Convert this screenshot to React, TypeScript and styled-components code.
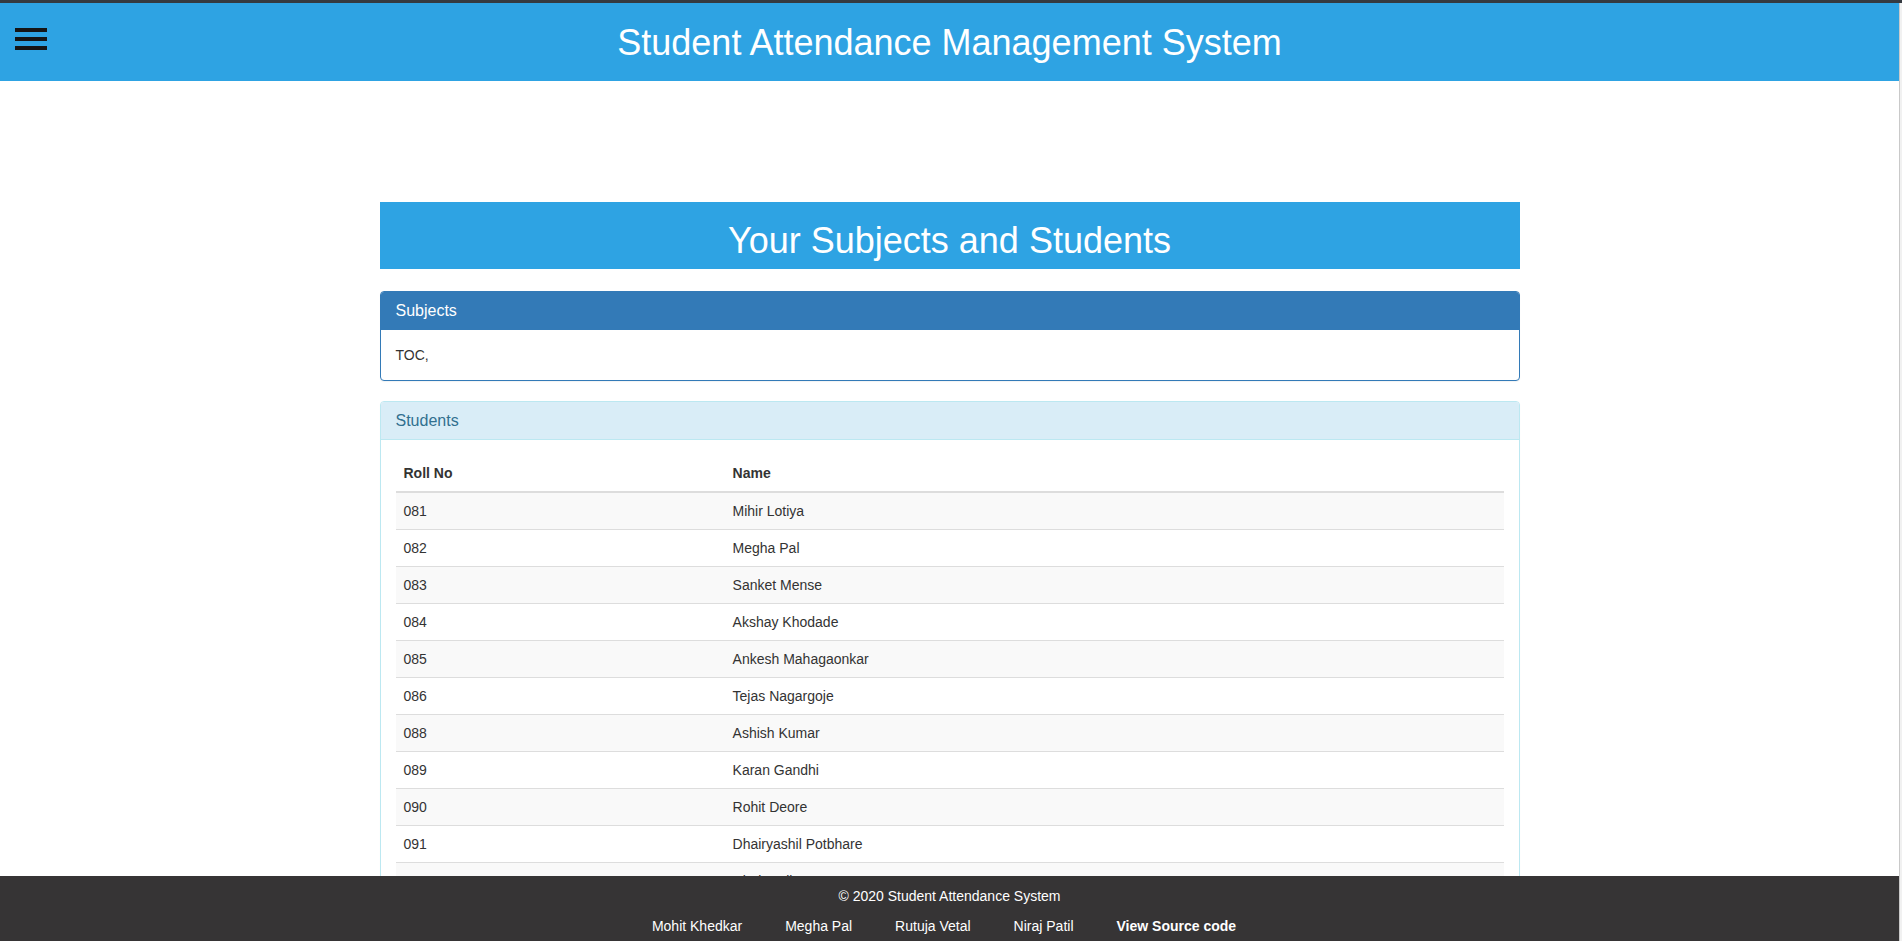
import styled, { createGlobalStyle } from 'styled-components';

const GlobalStyle = createGlobalStyle`
  * {
    box-sizing: border-box;
  }
  html, body {
    margin: 0;
    padding: 0;
    height: 100%;
    overflow: hidden;
  }
  body {
    font-family: 'Liberation Sans', Arial, Helvetica, sans-serif;
    font-size: 14px;
    line-height: 20px;
    color: #333;
    background: #fff;
  }
`;

const Shell = styled.div`
  display: flex;
  height: 100vh;
  border-top: 3px solid #353a40;
`;

const Page = styled.div`
  flex: 1;
  display: flex;
  flex-direction: column;
  min-width: 0;
`;

const ScrollTrack = styled.div`
  width: 3px;
  background: #f1f1f1;
  border-left: 1px solid #c9c9c9;
`;

const Header = styled.header`
  height: 78px;
  background-color: #2ea3e3;
  display: grid;
  grid-template-columns: 1fr auto 1fr;
  align-items: center;
`;

const Burger = styled.button`
  justify-self: start;
  margin-left: 15px;
  margin-bottom: 6px;
  width: 32px;
  height: 22px;
  padding: 0;
  border: none;
  background: transparent;
  display: flex;
  flex-direction: column;
  justify-content: space-between;
  cursor: pointer;
  span {
    display: block;
    height: 4px;
    background: #151515;
  }
`;

const Title = styled.h1`
  margin: 2px 0 0;
  font-size: 36px;
  font-weight: normal;
  line-height: 40px;
  color: #fff;
`;

const Content = styled.main`
  flex: 1;
  overflow: hidden;
  padding-top: 121px;
`;

const Container = styled.div`
  width: 1140px;
  margin: 0 auto;
`;

const Banner = styled.h2`
  margin: 0 0 22px;
  padding: 19px 0 8px;
  background-color: #2ea3e3;
  color: #fff;
  font-size: 36px;
  font-weight: normal;
  line-height: 40px;
  text-align: center;
`;

const Panel = styled.section<{ tone: 'primary' | 'info' }>`
  margin-bottom: 20px;
  background: #fff;
  border: 1px solid ${(p) => (p.tone === 'primary' ? '#337ab7' : '#bce8f1')};
  border-radius: 4px;
  box-shadow: 0 1px 1px rgba(0, 0, 0, 0.05);
`;

const PanelHeading = styled.div<{ tone: 'primary' | 'info' }>`
  padding: 10px 15px;
  border-bottom: 1px solid ${(p) => (p.tone === 'primary' ? '#337ab7' : '#bce8f1')};
  border-radius: 3px 3px 0 0;
  background-color: ${(p) => (p.tone === 'primary' ? '#337ab7' : '#d9edf7')};
  color: ${(p) => (p.tone === 'primary' ? '#fff' : '#31708f')};
  font-size: 16px;
  line-height: 17px;
`;

const PanelBody = styled.div`
  padding: 15px;
`;

const Table = styled.table`
  width: 100%;
  border-collapse: collapse;
  border-spacing: 0;
  th,
  td {
    padding: 8px;
    text-align: left;
    vertical-align: top;
    line-height: 20px;
  }
  th {
    font-weight: bold;
    border-bottom: 2px solid #ddd;
  }
  th:first-child {
    width: 29.7%;
  }
  td {
    border-top: 1px solid #ddd;
  }
  tbody tr:nth-of-type(odd) {
    background-color: #f9f9f9;
  }
`;

const Footer = styled.footer`
  height: 65px;
  padding-top: 10px;
  background-color: #363435;
  color: #fff;
  text-align: center;
`;

const Copy = styled.p`
  margin: 0 0 10px;
`;

const Links = styled.div`
  display: flex;
  justify-content: center;
  gap: 43px;
  padding-right: 11px;
`;

const FootLink = styled.a<{ strong?: boolean }>`
  color: #fff;
  text-decoration: none;
  font-weight: ${(p) => (p.strong ? 'bold' : 'normal')};
`;

const students = [
  ['081', 'Mihir Lotiya'],
  ['082', 'Megha Pal'],
  ['083', 'Sanket Mense'],
  ['084', 'Akshay Khodade'],
  ['085', 'Ankesh Mahagaonkar'],
  ['086', 'Tejas Nagargoje'],
  ['088', 'Ashish Kumar'],
  ['089', 'Karan Gandhi'],
  ['090', 'Rohit Deore'],
  ['091', 'Dhairyashil Potbhare'],
  ['092', 'Niraj Patil'],
  ['093', 'Rutuja Vetal'],
];

const authors = ['Mohit Khedkar', 'Megha Pal', 'Rutuja Vetal', 'Niraj Patil'];

function App() {
  return (
    <>
      <GlobalStyle />
      <Shell>
        <Page>
          <Header>
            <Burger aria-label='menu'>
              <span />
              <span />
              <span />
            </Burger>
            <Title>Student Attendance Management System</Title>
          </Header>
          <Content>
            <Container>
              <Banner>Your Subjects and Students</Banner>
              <Panel tone='primary'>
                <PanelHeading tone='primary'>Subjects</PanelHeading>
                <PanelBody>TOC,</PanelBody>
              </Panel>
              <Panel tone='info'>
                <PanelHeading tone='info'>Students</PanelHeading>
                <PanelBody>
                  <Table>
                    <thead>
                      <tr>
                        <th>Roll No</th>
                        <th>Name</th>
                      </tr>
                    </thead>
                    <tbody>
                      {students.map(([roll, name]) => (
                        <tr key={roll}>
                          <td>{roll}</td>
                          <td>{name}</td>
                        </tr>
                      ))}
                    </tbody>
                  </Table>
                </PanelBody>
              </Panel>
            </Container>
          </Content>
          <Footer>
            <Copy>© 2020 Student Attendance System</Copy>
            <Links>
              {authors.map((a) => (
                <FootLink key={a} href='#'>
                  {a}
                </FootLink>
              ))}
              <FootLink href='#' strong>
                View Source code
              </FootLink>
            </Links>
          </Footer>
        </Page>
        <ScrollTrack />
      </Shell>
    </>
  );
}

export default App;
